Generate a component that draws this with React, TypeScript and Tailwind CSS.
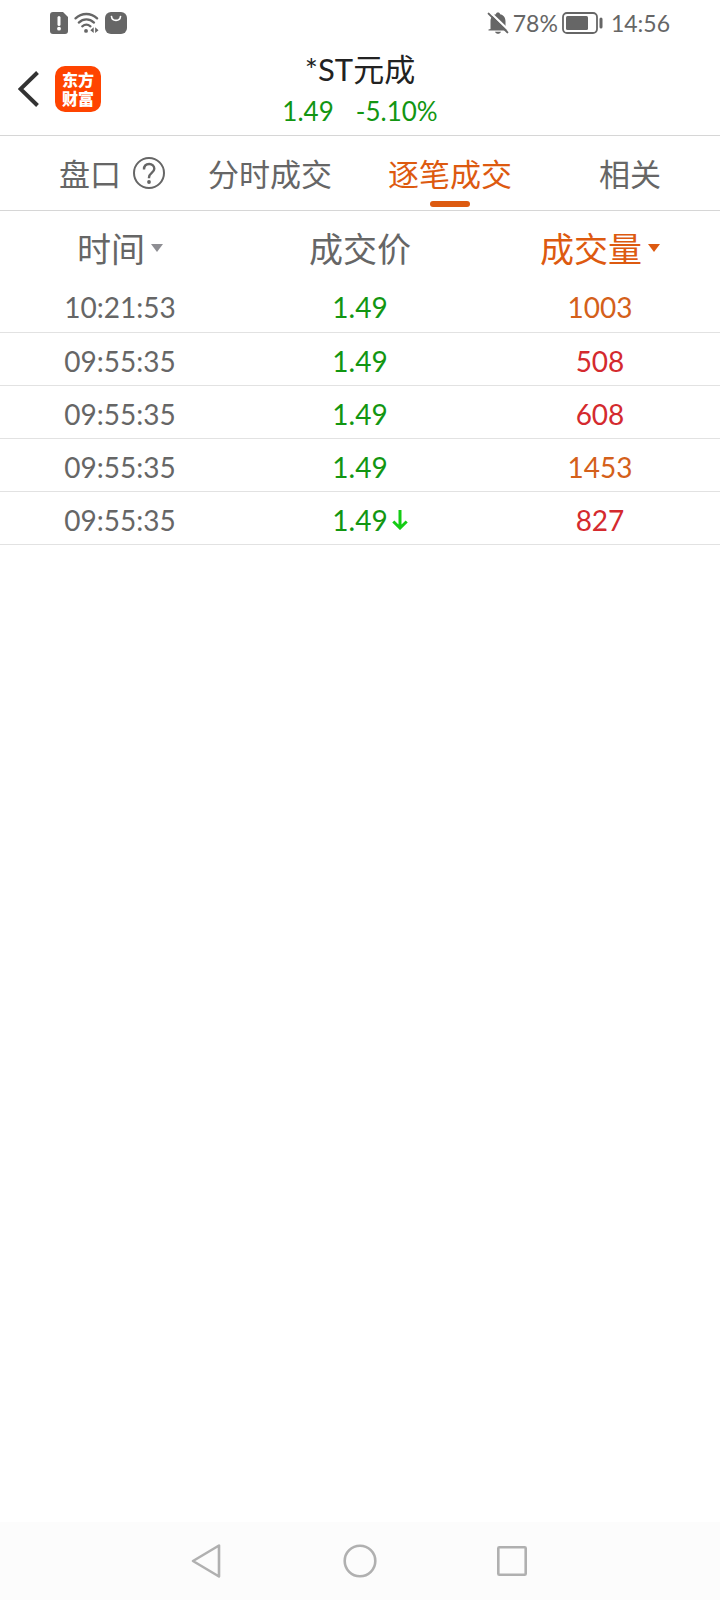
import type { ReactNode } from 'react'

type Trade = {
    id: number
    time: string
    price: string
    volume: number
    down?: boolean
}

const trades: Trade[] = [
    { id: 1, time: '10:21:53', price: '1.49', volume: 1003 },
    { id: 2, time: '09:55:35', price: '1.49', volume: 508 },
    { id: 3, time: '09:55:35', price: '1.49', volume: 608 },
    { id: 4, time: '09:55:35', price: '1.49', volume: 1453 },
    { id: 5, time: '09:55:35', price: '1.49', volume: 827, down: true },
]

const tabs = [
    { id: 'handicap', label: '盘口', help: true },
    { id: 'minute', label: '分时成交' },
    { id: 'tick', label: '逐笔成交' },
    { id: 'related', label: '相关' },
]

const activeTab = 'tick'

// Orders of 1000 lots and more are shown in orange
const LARGE_ORDER = 1000

function StatusBar() {
    return (
        <div className="flex h-[46px] items-center justify-between px-[50px] text-[23px] text-[#666666]">
            <div className="flex items-center gap-1.5">
                <svg className="h-[22px] w-[18px]" viewBox="0 0 18 22" aria-hidden="true">
                    <path d="M3 0h10l5 5v14a3 3 0 0 1-3 3H3a3 3 0 0 1-3-3V3a3 3 0 0 1 3-3z" fill="currentColor" />
                    <path d="M9 5.5v7" stroke="#fff" strokeWidth="3" strokeLinecap="round" />
                    <circle cx="9" cy="16.7" r="1.9" fill="#fff" />
                </svg>
                <svg className="h-[22px] w-[25px]" viewBox="0 0 26 22" fill="none" stroke="currentColor" strokeWidth="2.4" strokeLinecap="round" aria-hidden="true">
                    <path d="M1.6 6.2C8 .1 17.6 .1 24 6.2" />
                    <path d="M5 10.5c4.800-4.300 11-4.300 15.800 0" />
                    <path d="M8.6 14.5c2.600-2.200 5.900-2.200 8.500 0" />
                    <circle cx="12.5" cy="19.2" r="2" fill="currentColor" stroke="none" />
                    <path d="M20.500 15.500v6l-3.500-3zM22 15.500v6l3.500-3z" fill="currentColor" stroke="none" />
                </svg>
                <svg className="size-[22px]" viewBox="0 0 22 22" aria-hidden="true">
                    <rect width="22" height="22" rx="6" fill="currentColor" />
                    <path d="M6.500 4.500c.6 5.200 8.400 5.200 9 0" fill="none" stroke="#fff" strokeWidth="1.7" strokeLinecap="round" />
                </svg>
            </div>
            <div className="flex items-center">
                <svg className="mr-1 size-[22px]" viewBox="0 0 22 22" aria-hidden="true">
                    <path d="M3.500 17V9.500C3.500 5.500 5.700 3 9 2.300 9 1 9.700.5 11 .5s2 .5 2 1.800c3.300.7 5.500 3.200 5.500 7.200v5l2 3v1h-19v-1z" fill="currentColor" />
                    <path d="M8 19.800h6c-.6 1.500-1.700 2-3 2s-2.400-.5-3-2z" fill="currentColor" />
                    <path d="M3 .2 22 18.500" stroke="#fff" strokeWidth="2.2" />
                    <path d="M1.600 1.600 20.400 20.400" stroke="currentColor" strokeWidth="2" strokeLinecap="round" />
                </svg>
                <span>78%</span>
                <svg className="ml-1 h-[22px] w-[41px]" viewBox="0 0 41 22" aria-hidden="true">
                    <rect x="1" y="1" width="34" height="20" rx="4" fill="none" stroke="currentColor" strokeWidth="1.8" />
                    <rect x="4" y="4" width="22" height="14" rx="1.5" fill="currentColor" />
                    <rect x="37.5" y="5.5" width="3" height="11" rx="1.5" fill="currentColor" />
                </svg>
                <span className="ml-2">14:56</span>
            </div>
        </div>
    )
}

function Header() {
    return (
        <header className="grid h-[90px] grid-cols-[1fr_auto_1fr] border-b border-[#d6d6d6]">
            <div className="flex items-center gap-4 pb-1 pl-[18px]">
                <button type="button" aria-label="返回">
                    <svg className="h-9 w-[21px]" viewBox="0 0 21 36" fill="none" stroke="#333333" strokeWidth="4" aria-hidden="true">
                        <path d="M19.500 1.500 2.500 18l17 16.500" />
                    </svg>
                </button>
                <a href="#home" className="flex size-[46px] flex-col items-center justify-center rounded-[10px] bg-[#ff4400] text-base leading-[19px] font-black text-white">
                    <span>东方</span>
                    <span>财富</span>
                </a>
            </div>
            <div className="flex flex-col items-center">
                <h1 className="text-[31px] leading-[46px] text-[#222222]">*ST元成</h1>
                <p className="flex gap-[22px] text-[26px] leading-[38px] text-[#129612]">
                    <span>1.49</span>
                    <span>-5.10%</span>
                </p>
            </div>
        </header>
    )
}

function HelpIcon() {
    return (
        <svg className="size-8" viewBox="0 0 32 32" fill="none" stroke="currentColor" strokeWidth="2" aria-hidden="true">
            <circle cx="16" cy="16" r="15" />
            <path d="M11 12.500c0-3.300 2-5.500 5.200-5.500 3 0 5.100 2 5.100 4.700 0 4.200-5.300 4.300-5.300 8.800v.7" strokeWidth="2.4" />
            <circle cx="16" cy="25" r="1.9" fill="currentColor" stroke="none" />
        </svg>
    )
}

function Tabs() {
    return (
        <nav className="grid h-[75px] grid-cols-4 border-b border-[#d6d6d6] text-[31px] text-[#666666]">
            {tabs.map((tab) => (
                <div key={tab.id} className="relative flex items-center justify-center">
                    <button type="button" className={tab.id === activeTab ? 'pt-0.5 text-[#dd5a10]' : 'pt-0.5'}>
                        {tab.label}
                    </button>
                    {tab.help && (
                        <button type="button" aria-label="帮助" className="absolute right-[15px]">
                            <HelpIcon />
                        </button>
                    )}
                    {tab.id === activeTab && (
                        <span className="absolute bottom-[3px] h-1.5 w-10 rounded-full bg-[#dd5a10]" />
                    )}
                </div>
            ))}
        </nav>
    )
}

function SortMark({ className }: { className: string }) {
    return (
        <svg className={className} viewBox="0 0 12 8" fill="currentColor" aria-hidden="true">
            <path d="M0 0h12L6 8z" />
        </svg>
    )
}

function TradeTable() {
    return (
        <table className="w-full table-fixed text-center">
            <thead>
                <tr className="h-[68px] text-[34px] text-[#666666]">
                    <th className="p-0 pt-1.5 font-normal">
                        <button type="button" className="inline-flex items-center gap-1.5">
                            时间
                            <SortMark className="h-2 w-3 text-[#8e8e93]" />
                        </button>
                    </th>
                    <th className="p-0 pt-1.5 font-normal">成交价</th>
                    <th className="p-0 pt-1.5 font-normal text-[#dd5a10]">
                        <button type="button" className="inline-flex items-center gap-1.5">
                            成交量
                            <SortMark className="h-2 w-3" />
                        </button>
                    </th>
                </tr>
            </thead>
            <tbody>
                {trades.map((trade) => (
                    <tr key={trade.id} className="h-[53px] border-b border-[#e2e2e2] text-[28px] leading-9">
                        <td className="p-0 pt-1 text-[#666666]">{trade.time}</td>
                        <td className="p-0 pt-1 text-[#129612]">
                            <span className="relative inline-flex items-center">
                                {trade.price}
                                {trade.down && (
                                    <svg className="absolute left-full ml-1 h-5 w-4" viewBox="0 0 16 20" fill="none" stroke="#14cc14" strokeWidth="3" aria-hidden="true">
                                        <path d="M8 0v18M1.300 11.500 8 18l6.700-6.500" />
                                    </svg>
                                )}
                            </span>
                        </td>
                        <td className={trade.volume >= LARGE_ORDER ? 'p-0 pt-1 text-[#d4601a]' : 'p-0 pt-1 text-[#d42a2e]'}>
                            {trade.volume}
                        </td>
                    </tr>
                ))}
            </tbody>
        </table>
    )
}

function NavButton({ label, children }: { label: string; children: ReactNode }) {
    return (
        <button type="button" aria-label={label} className="flex h-full w-[152px] items-center justify-center">
            <svg className="size-9" viewBox="0 0 36 36" fill="none" stroke="#b0b0b0" strokeWidth="2.6" strokeLinejoin="round" aria-hidden="true">
                {children}
            </svg>
        </button>
    )
}

export default function App() {
    return (
        <div className="flex min-h-screen flex-col bg-white font-['Lato','Noto_Sans_CJK_SC',sans-serif]">
            <StatusBar />
            <Header />
            <Tabs />
            <main className="flex-1">
                <TradeTable />
            </main>
            {/* System navigation */}
            <footer className="flex h-[78px] items-center justify-center bg-[#fcfcfc]">
                <NavButton label="后退">
                    <path d="M29 2.500v31L3 18z" />
                </NavButton>
                <NavButton label="主屏幕">
                    <circle cx="18" cy="18" r="15.3" />
                </NavButton>
                <NavButton label="最近任务">
                    <rect x="4.3" y="4.3" width="27.4" height="27.4" rx="1" />
                </NavButton>
            </footer>
        </div>
    )
}
